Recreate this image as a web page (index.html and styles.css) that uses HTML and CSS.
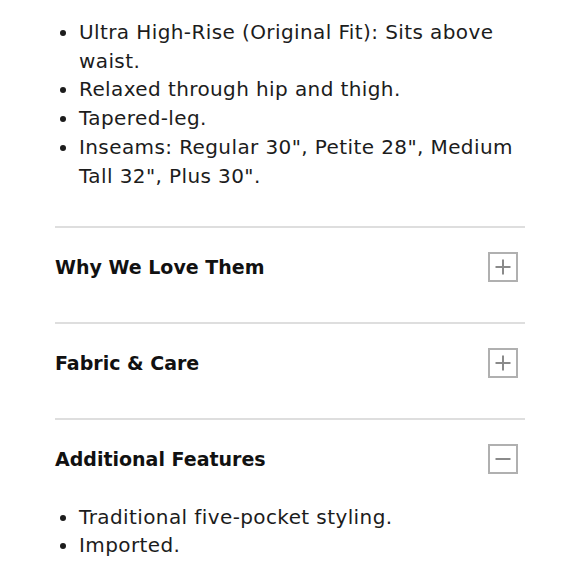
FILE: index.html
```html
<!DOCTYPE html>
<html>
<head>
<meta charset="utf-8">
<link rel="stylesheet" href="styles.css">
</head>
<body>
<div class="details">
  <ul class="bullets top-list">
    <li>Ultra High-Rise (Original Fit): Sits above waist.</li>
    <li>Relaxed through hip and thigh.</li>
    <li>Tapered-leg.</li>
    <li>Inseams: Regular 30", Petite 28", Medium Tall 32", Plus 30".</li>
  </ul>
  <div class="section">
    <div class="section-head">
      <h3>Why We Love Them</h3>
      <span class="toggle">
        <svg viewBox="0 0 26 26" width="26" height="26"><path d="M13 5.5v15M5.5 13h15" stroke="#8a8a8a" stroke-width="2"/></svg>
      </span>
    </div>
  </div>
  <div class="section">
    <div class="section-head">
      <h3>Fabric &amp; Care</h3>
      <span class="toggle">
        <svg viewBox="0 0 26 26" width="26" height="26"><path d="M13 5.5v15M5.5 13h15" stroke="#8a8a8a" stroke-width="2"/></svg>
      </span>
    </div>
  </div>
  <div class="section open">
    <div class="section-head">
      <h3>Additional Features</h3>
      <span class="toggle">
        <svg viewBox="0 0 26 26" width="26" height="26"><path d="M5.5 13h15" stroke="#8a8a8a" stroke-width="2"/></svg>
      </span>
    </div>
    <ul class="bullets">
      <li>Traditional five-pocket styling.</li>
      <li>Imported.</li>
    </ul>
  </div>
</div>
</body>
</html>
```
FILE: styles.css
```css
html, body {
  margin: 0;
  padding: 0;
  background: #ffffff;
}
body {
  font-family: "DejaVu Sans", "Open Sans", sans-serif;
  color: #1c1c1c;
}
.details {
  width: 470px;
  padding: 18px 0 0 55px;
}
.bullets {
  margin: 0;
  padding: 0 0 0 24px;
  font-size: 20px;
  letter-spacing: 0.4px;
  line-height: 28.7px;
}
.top-list {
  margin-bottom: 36px;
}
.section {
  border-top: 2px solid #dedede;
}
.section-head {
  display: flex;
  justify-content: space-between;
  align-items: center;
  padding: 24px 7px 40px 0;
}
.section-head h3 {
  margin: 0;
  font-size: 19px;
  font-weight: bold;
  color: #111;
}
.toggle {
  display: flex;
  width: 26px;
  height: 26px;
  border: 2px solid #b0b0b0;
  align-items: center;
  justify-content: center;
}
.toggle svg {
  width: 26px;
  height: 26px;
}
.open .section-head {
  padding-bottom: 28.5px;
}
```
